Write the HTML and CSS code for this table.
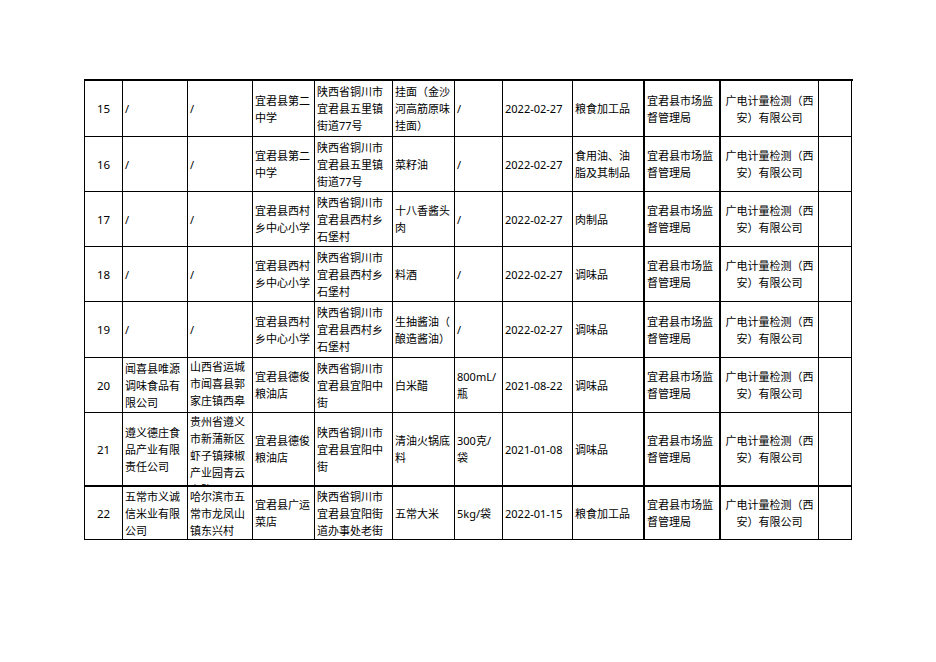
FILE: index.html
```html
<!DOCTYPE html>
<html lang="zh-CN">
<head>
<meta charset="utf-8">
<title>抽检信息</title>
<link rel="stylesheet" href="styles.css">
</head>
<body>
<div class="sheet">
  <!-- row 15 -->
  <div class="c num">15</div>
  <div class="c">/</div>
  <div class="c">/</div>
  <div class="c">宜君县第二<br>中学</div>
  <div class="c">陕西省铜川市<br>宜君县五里镇<br>街道77号</div>
  <div class="c">挂面（金沙<br>河高筋原味<br>挂面）</div>
  <div class="c">/</div>
  <div class="c">2022-02-27</div>
  <div class="c thick">粮食加工品</div>
  <div class="c thick">宜君县市场监<br>督管理局</div>
  <div class="c ctr">广电计量检测（西<br>安）有限公司</div>
  <div class="c"></div>
  <!-- row 16 -->
  <div class="c num">16</div>
  <div class="c">/</div>
  <div class="c">/</div>
  <div class="c">宜君县第二<br>中学</div>
  <div class="c">陕西省铜川市<br>宜君县五里镇<br>街道77号</div>
  <div class="c">菜籽油</div>
  <div class="c">/</div>
  <div class="c">2022-02-27</div>
  <div class="c thick">食用油、油<br>脂及其制品</div>
  <div class="c thick">宜君县市场监<br>督管理局</div>
  <div class="c ctr">广电计量检测（西<br>安）有限公司</div>
  <div class="c"></div>
  <!-- row 17 -->
  <div class="c num">17</div>
  <div class="c">/</div>
  <div class="c">/</div>
  <div class="c">宜君县西村<br>乡中心小学</div>
  <div class="c">陕西省铜川市<br>宜君县西村乡<br>石堡村</div>
  <div class="c">十八香酱头<br>肉</div>
  <div class="c">/</div>
  <div class="c">2022-02-27</div>
  <div class="c thick">肉制品</div>
  <div class="c thick">宜君县市场监<br>督管理局</div>
  <div class="c ctr">广电计量检测（西<br>安）有限公司</div>
  <div class="c"></div>
  <!-- row 18 -->
  <div class="c num">18</div>
  <div class="c">/</div>
  <div class="c">/</div>
  <div class="c">宜君县西村<br>乡中心小学</div>
  <div class="c">陕西省铜川市<br>宜君县西村乡<br>石堡村</div>
  <div class="c">料酒</div>
  <div class="c">/</div>
  <div class="c">2022-02-27</div>
  <div class="c thick">调味品</div>
  <div class="c thick">宜君县市场监<br>督管理局</div>
  <div class="c ctr">广电计量检测（西<br>安）有限公司</div>
  <div class="c"></div>
  <!-- row 19 -->
  <div class="c num">19</div>
  <div class="c">/</div>
  <div class="c">/</div>
  <div class="c">宜君县西村<br>乡中心小学</div>
  <div class="c">陕西省铜川市<br>宜君县西村乡<br>石堡村</div>
  <div class="c">生抽酱油（<br>酿造酱油）</div>
  <div class="c">/</div>
  <div class="c">2022-02-27</div>
  <div class="c thick">调味品</div>
  <div class="c thick">宜君县市场监<br>督管理局</div>
  <div class="c ctr">广电计量检测（西<br>安）有限公司</div>
  <div class="c"></div>
  <!-- row 20 -->
  <div class="c num">20</div>
  <div class="c">闻喜县唯源<br>调味食品有<br>限公司</div>
  <div class="c top">山西省运城<br>市闻喜县郭<br>家庄镇西皋<br>村</div>
  <div class="c">宜君县德俊<br>粮油店</div>
  <div class="c">陕西省铜川市<br>宜君县宜阳中<br>街</div>
  <div class="c">白米醋</div>
  <div class="c">800mL/<br>瓶</div>
  <div class="c">2021-08-22</div>
  <div class="c thick">调味品</div>
  <div class="c thick">宜君县市场监<br>督管理局</div>
  <div class="c ctr">广电计量检测（西<br>安）有限公司</div>
  <div class="c"></div>
  <!-- row 21 -->
  <div class="c rb num">21</div>
  <div class="c rb">遵义德庄食<br>品产业有限<br>责任公司</div>
  <div class="c rb top">贵州省遵义<br>市新蒲新区<br>虾子镇辣椒<br>产业园青云<br>东路</div>
  <div class="c rb">宜君县德俊<br>粮油店</div>
  <div class="c rb">陕西省铜川市<br>宜君县宜阳中<br>街</div>
  <div class="c rb">清油火锅底<br>料</div>
  <div class="c rb">300克/<br>袋</div>
  <div class="c rb">2021-01-08</div>
  <div class="c rb thick">调味品</div>
  <div class="c rb thick">宜君县市场监<br>督管理局</div>
  <div class="c rb ctr">广电计量检测（西<br>安）有限公司</div>
  <div class="c rb"></div>
  <!-- row 22 -->
  <div class="c num">22</div>
  <div class="c">五常市义诚<br>信米业有限<br>公司</div>
  <div class="c">哈尔滨市五<br>常市龙凤山<br>镇东兴村</div>
  <div class="c">宜君县广运<br>菜店</div>
  <div class="c">陕西省铜川市<br>宜君县宜阳街<br>道办事处老街</div>
  <div class="c">五常大米</div>
  <div class="c">5kg/袋</div>
  <div class="c">2022-01-15</div>
  <div class="c thick">粮食加工品</div>
  <div class="c thick">宜君县市场监<br>督管理局</div>
  <div class="c ctr">广电计量检测（西<br>安）有限公司</div>
  <div class="c"></div>
</div>
</body>
</html>
```
FILE: styles.css
```css
html, body {
  margin: 0;
  padding: 0;
  background: #ffffff;
}

body {
  font-family: "Noto Sans", "Noto Sans CJK SC", sans-serif;
  font-size: 11px;
  line-height: 17px;
  color: #000000;
}

.sheet {
  margin: 79px 0 0 84px;
  width: 768px;
  display: grid;
  grid-template-columns: 38px 65px 65px 62px 78px 62px 48px 70px 72px 76px 98px 33px;
  grid-template-rows: 56px 55px 55px 55px 56px 55px 74px 53px;
  border-top: 2px solid #000;
  border-left: 1px solid #000;
  box-sizing: content-box;
}

.c {
  box-sizing: border-box;
  border-right: 1px solid #000;
  border-bottom: 1px solid #000;
  padding: 0 0 0 2px;
  display: flex;
  align-items: center;
  overflow: hidden;
  white-space: nowrap;
}

.c.thick {
  border-right-width: 2px;
}

.c.rb {
  border-bottom-width: 2px;
}

.c.num {
  justify-content: center;
  padding: 0;
  font-size: 11.5px;
}

.c.ctr {
  justify-content: center;
  text-align: center;
  padding: 0;
}

.c.top {
  align-items: flex-start;
  padding-top: 0;
}
```
